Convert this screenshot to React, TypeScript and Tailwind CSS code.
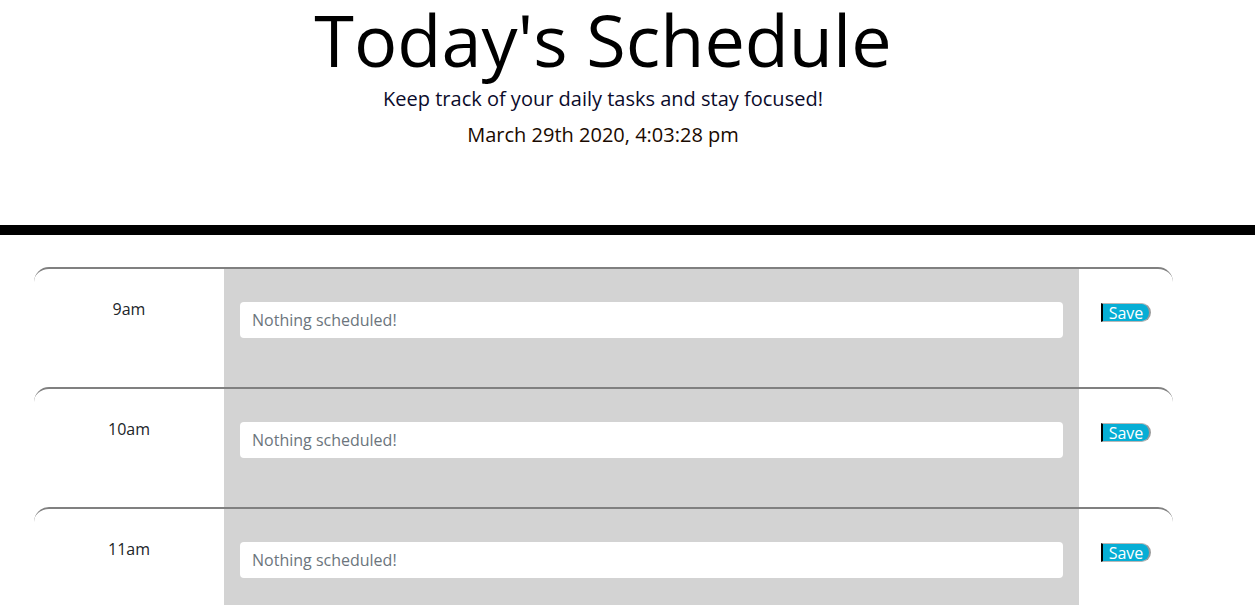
const hours = ["9am", "10am", "11am"];

function HourRow({ hour }: { hour: string }) {
  return (
    <div className="flex h-[120px] border-t-2 border-[#808080] rounded-t-[15px]">
      <div className="w-[190px] pt-[28px] text-center text-[16px] leading-6 text-[#212529]">{hour}</div>
      <div className="w-[855px] bg-[#d3d3d3] px-4 pt-[33px]">
        <div className="h-9 rounded bg-white px-3 flex items-center text-[16px] text-[#6c757d]">
          Nothing scheduled!
        </div>
      </div>
      <div className="flex-1 pt-[34px] pl-[22px]">
        <button className="h-[19px] w-[50px] flex items-center justify-center bg-[#06aed5] text-white text-[16px] leading-none border-l-2 border-l-black border-y border-y-[#b8b8b8] border-r-2 border-r-[#9a9a9a] rounded-r-[10px]">
          Save
        </button>
      </div>
    </div>
  );
}

export default function App() {
  return (
    <div className="min-h-screen bg-white text-black" style={{ fontFamily: '"Open Sans", "Liberation Sans", sans-serif' }}>
      <header className="h-[235px] border-b-[10px] border-black">
        <div className="w-[1206px] text-center">
          <h1 className="text-[72px] font-normal leading-[1.1] text-black">Today's Schedule</h1>
          <p className="mt-[5px] text-[20px] leading-[30px] text-[#0b0b2b]">Keep track of your daily tasks and stay focused!</p>
          <p className="mt-[6px] text-[20px] leading-[30px] text-[#1a0a00]">March 29th 2020, 4:03:28 pm</p>
        </div>
      </header>
      <main className="ml-[34px] w-[1139px] pt-[32px]">
        {hours.map((h) => (
          <HourRow key={h} hour={h} />
        ))}
      </main>
    </div>
  );
}
